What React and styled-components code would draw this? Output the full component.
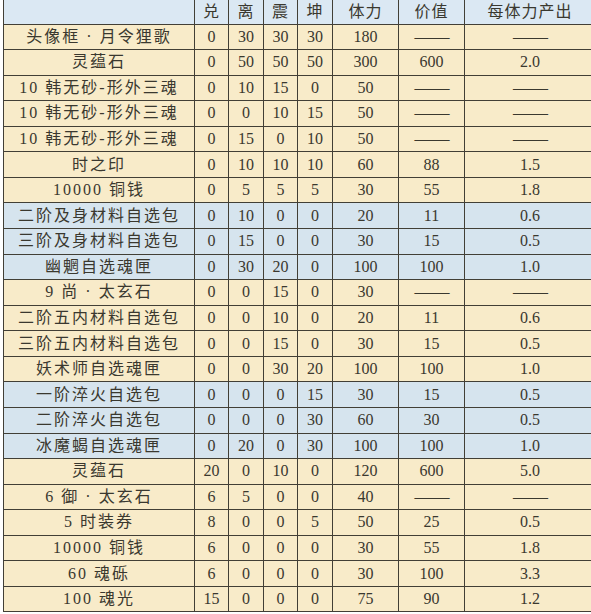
import React from "react";
import styled, { createGlobalStyle } from "styled-components";

const GlobalStyle = createGlobalStyle`
  html, body {
    margin: 0;
    padding: 0;
    background: #ffffff;
    overflow: hidden;
  }
`;

const Page = styled.div`
  width: 591px;
  height: 614px;
  padding-left: 3px;
  box-sizing: border-box;
  overflow: hidden;
`;

const Table = styled.table`
  table-layout: fixed;
  border-collapse: collapse;
  width: 592px;
  font-family: "Liberation Serif", "Noto Sans CJK SC", serif;
  font-size: 16px;
  color: #3a382f;
`;

const Row = styled.tr`
  height: ${(p) => (p.$head ? "24px" : "25.57px")};
  background: ${(p) =>
    p.$head ? "#dbe8f3" : p.$tone === "blue" ? "#d6e4ee" : "#f8ebc9"};
`;

const Cell = styled.td`
  border: 1px solid #423f36;
  border-top: ${(p) => (p.$head ? "none" : "1px solid #423f36")};
  padding: 0;
  text-align: center;
  vertical-align: middle;
  line-height: 1;
  white-space: nowrap;
`;

const HeadCell = styled(Cell).attrs({ as: "th" })`
  font-weight: normal;
  letter-spacing: 1px;
`;

const Name = styled(Cell)`
  letter-spacing: 2px;
`;

const Dash = styled.span`
  font-size: 18px;
  letter-spacing: -1px;
`;

const widths = [191, 34, 35, 34, 35, 66, 66, 131];
const heads = ["", "兑", "离", "震", "坤", "体力", "价值", "每体力产出"];

const rows = [
  ["头像框 · 月令狸歌", 0, 30, 30, 30, 180, null, null],
  ["灵蕴石", 0, 50, 50, 50, 300, 600, "2.0"],
  ["10 韩无砂-形外三魂", 0, 10, 15, 0, 50, null, null],
  ["10 韩无砂-形外三魂", 0, 0, 10, 15, 50, null, null],
  ["10 韩无砂-形外三魂", 0, 15, 0, 10, 50, null, null],
  ["时之印", 0, 10, 10, 10, 60, 88, "1.5"],
  ["10000 铜钱", 0, 5, 5, 5, 30, 55, "1.8"],
  ["二阶及身材料自选包", 0, 10, 0, 0, 20, 11, "0.6", "blue"],
  ["三阶及身材料自选包", 0, 15, 0, 0, 30, 15, "0.5", "blue"],
  ["幽魍自选魂匣", 0, 30, 20, 0, 100, 100, "1.0", "blue"],
  ["9 尚 · 太玄石", 0, 0, 15, 0, 30, null, null],
  ["二阶五内材料自选包", 0, 0, 10, 0, 20, 11, "0.6"],
  ["三阶五内材料自选包", 0, 0, 15, 0, 30, 15, "0.5"],
  ["妖术师自选魂匣", 0, 0, 30, 20, 100, 100, "1.0"],
  ["一阶淬火自选包", 0, 0, 0, 15, 30, 15, "0.5", "blue"],
  ["二阶淬火自选包", 0, 0, 0, 30, 60, 30, "0.5", "blue"],
  ["冰魔蝎自选魂匣", 0, 20, 0, 30, 100, 100, "1.0", "blue"],
  ["灵蕴石", 20, 0, 10, 0, 120, 600, "5.0"],
  ["6 御 · 太玄石", 6, 5, 0, 0, 40, null, null],
  ["5 时装券", 8, 0, 0, 5, 50, 25, "0.5"],
  ["10000 铜钱", 6, 0, 0, 0, 30, 55, "1.8"],
  ["60 魂砾", 6, 0, 0, 0, 30, 100, "3.3"],
  ["100 魂光", 15, 0, 0, 0, 75, 90, "1.2"],
];

const Value = ({ v }) => (v === null ? <Dash>——</Dash> : v);

const App = () => (
  <>
    <GlobalStyle />
    <Page>
      <Table>
        <colgroup>
          {widths.map((w, i) => (
            <col key={i} style={{ width: w }} />
          ))}
        </colgroup>
        <thead>
          <Row $head>
            {heads.map((h, i) => (
              <HeadCell key={i} $head>
                {h}
              </HeadCell>
            ))}
          </Row>
        </thead>
        <tbody>
          {rows.map((r, i) => (
            <Row key={i} $tone={r[8]}>
              <Name>{r[0]}</Name>
              {r.slice(1, 8).map((v, j) => (
                <Cell key={j}>
                  <Value v={v} />
                </Cell>
              ))}
            </Row>
          ))}
        </tbody>
      </Table>
    </Page>
  </>
);

export default App;
